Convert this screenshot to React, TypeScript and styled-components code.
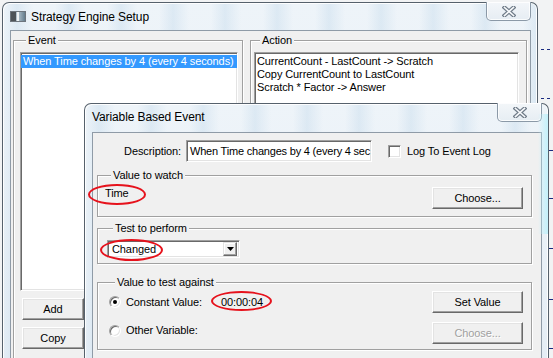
import React from "react";
import styled, { createGlobalStyle, css } from "styled-components";

const GlobalStyle = createGlobalStyle`
  html, body {
    margin: 0;
    padding: 0;
  }
  body {
    width: 553px;
    height: 358px;
    overflow: hidden;
    font-family: "Liberation Sans", Arial, sans-serif;
    font-size: 11px;
    letter-spacing: -0.1px;
    color: #000;
  }
`;

const Desktop = styled.div`
  position: relative;
  width: 553px;
  height: 358px;
  overflow: hidden;
  background: #f2f3f4;
`;

/* tree dashes peeking out on the right of the desktop */
const TreeLines = styled.svg`
  position: absolute;
  top: 0;
  right: 0;
`;

const glass = css`
  background:
    repeating-linear-gradient(
      90deg,
      rgba(180, 208, 230, 0) 0px,
      rgba(180, 208, 230, 0.3) 14px,
      rgba(180, 208, 230, 0) 30px,
      rgba(180, 208, 230, 0) 52px
    ),
    linear-gradient(180deg, #eef4f9 0%, #e3ecf4 100%);
`;

const Window = styled.div<{
  $left: number;
  $top: number;
  $width: number;
  $height: number;
  $glow?: boolean;
}>`
  position: absolute;
  left: ${(p) => p.$left}px;
  top: ${(p) => p.$top}px;
  width: ${(p) => p.$width}px;
  height: ${(p) => p.$height}px;
  box-sizing: border-box;
  display: flex;
  flex-direction: column;
  padding: 0 6px 0 7px;
  border: 1px solid #56616c;
  border-bottom: none;
  border-radius: 7px 7px 0 0;
  ${glass};
  box-shadow: inset 1px 1px 0 rgba(255, 255, 255, 0.9),
    inset -1px 0 0 rgba(255, 255, 255, 0.9);

  ${(p) =>
    p.$glow &&
    css`
      &::after {
        content: "";
        position: absolute;
        right: 0;
        top: 10px;
        width: 10px;
        height: 120px;
        background: linear-gradient(90deg, rgba(190, 240, 250, 0), rgba(190, 240, 250, 0.9));
        pointer-events: none;
      }
    `}
`;

const TitleBar = styled.div<{ $height: number }>`
  flex: none;
  height: ${(p) => p.$height}px;
  display: flex;
  align-items: center;
  gap: 5px;
  padding-bottom: ${(p) => (p.$height > 27 ? 2 : 0)}px;
  box-sizing: border-box;
`;

const TitleText = styled.span`
  font-family: "Liberation Sans", Arial, sans-serif;
  font-size: 12px;
  color: #000;
`;

const CloseButton = styled.div`
  align-self: flex-start;
  margin: -1px 0 0 auto;
  width: 45px;
  height: 19px;
  box-sizing: border-box;
  display: flex;
  align-items: center;
  justify-content: center;
  border: 1px solid #8b99a7;
  border-top: none;
  border-radius: 0 0 5px 5px;
  background: linear-gradient(180deg, #f3f6f9 0%, #e6edf3 100%);
  box-shadow: inset 0 0 0 1px rgba(255, 255, 255, 0.8);
`;

const Client = styled.div`
  flex: 1;
  box-sizing: border-box;
  background: #f0f0f0;
  border: 1px solid #8f9ba7;
  border-bottom: none;
`;

const SetupBody = styled(Client)`
  display: grid;
  grid-template-columns: 230px 277px;
  column-gap: 7px;
  align-items: start;
  padding: 3px 2px 0 2px;
`;

const DialogBody = styled(Client)`
  display: flex;
  flex-direction: column;
  padding: 7px 9px 0 4px;
`;

const GroupBox = styled.fieldset<{ $pad: string; $gap?: number }>`
  margin: ${(p) => p.$gap ?? 0}px 0 0 0;
  padding: ${(p) => p.$pad};
  min-width: 0;
  border: 1px solid #a0a0a0;
  box-shadow: inset 1px 1px 0 #fff, 1px 1px 0 #fff;
`;

const Legend = styled.legend`
  margin-left: 6px;
  padding: 0 2px;
  line-height: 13px;
  background: #f0f0f0;
  position: relative;
`;

const sunken = css`
  box-sizing: border-box;
  background: #fff;
  border: 1px solid;
  border-color: #a0a0a0 #fff #fff #a0a0a0;
  box-shadow: inset 1px 1px 0 #696969, inset -1px -1px 0 #e3e3e3;
`;

const ListBox = styled.div<{ $height: number }>`
  ${sunken};
  height: ${(p) => p.$height}px;
  padding: 2px 0 0 0;
  overflow: hidden;
`;

const ListItem = styled.div<{ $selected?: boolean }>`
  height: 13px;
  line-height: 13px;
  padding: 0 1px 0 2px;
  white-space: nowrap;
  color: ${(p) => (p.$selected ? "#fff" : "#000")};
  background: ${(p) => (p.$selected ? "#3399ff" : "transparent")};
`;

const Button = styled.button<{ $width: number; $top?: number }>`
  width: ${(p) => p.$width}px;
  height: 22px;
  margin-top: ${(p) => p.$top ?? 0}px;
  box-sizing: border-box;
  padding: 0;
  font: inherit;
  letter-spacing: inherit;
  color: #000;
  background: #f0f0f0;
  border: 1px solid;
  border-color: #fff #696969 #696969 #fff;
  box-shadow: inset -1px -1px 0 #a0a0a0, inset 1px 1px 0 #e3e3e3;

  &:disabled {
    color: #a0a0a0;
    text-shadow: 1px 1px 0 #fff;
  }
`;

const ButtonStack = styled.div`
  display: flex;
  flex-direction: column;
  padding-left: 2px;
`;

const DescRow = styled.div`
  display: flex;
  align-items: center;
  height: 22px;
`;

const FieldLabel = styled.span`
  width: 84px;
  text-align: right;
`;

const TextField = styled.div`
  ${sunken};
  width: 186px;
  height: 22px;
  margin-left: 5px;
  padding: 0 1px 0 3px;
  line-height: 20px;
  letter-spacing: -0.2px;
  white-space: nowrap;
  overflow: hidden;
`;

const CheckBox = styled.span`
  ${sunken};
  width: 13px;
  height: 13px;
  margin-left: 16px;
`;

const CheckLabel = styled.span`
  margin-left: 6px;
`;

const WatchRow = styled.div`
  display: flex;
  align-items: flex-start;
  justify-content: space-between;
  line-height: 13px;
`;

const Combo = styled.div`
  ${sunken};
  width: 133px;
  height: 18px;
  display: flex;
  align-items: center;
  padding: 0 2px 0 4px;
  line-height: 13px;
`;

const ComboText = styled.span`
  flex: 1;
`;

const DropButton = styled.span`
  width: 14px;
  height: 14px;
  box-sizing: border-box;
  display: flex;
  align-items: center;
  justify-content: center;
  background: #f0f0f0;
  border: 1px solid;
  border-color: #e3e3e3 #696969 #696969 #e3e3e3;
  box-shadow: inset -1px -1px 0 #a0a0a0, inset 1px 1px 0 #fff;
`;

const OptionRow = styled.div<{ $top?: number }>`
  display: grid;
  grid-template-columns: 112px 1fr auto;
  align-items: center;
  margin-top: ${(p) => p.$top ?? 0}px;
  line-height: 13px;
`;

const RadioOption = styled.label<{ $shift?: number }>`
  display: flex;
  align-items: center;
  gap: 5px;
  align-self: ${(p) => (p.$shift ? "start" : "center")};
  margin-top: ${(p) => p.$shift ?? 0}px;
`;

const Radio = styled.span<{ $checked?: boolean }>`
  width: 12px;
  height: 12px;
  box-sizing: border-box;
  border-radius: 50%;
  background: #fff;
  border: 1px solid;
  border-color: #a0a0a0 #fff #fff #a0a0a0;
  box-shadow: inset 1px 1px 0 #696969, inset -1px -1px 0 #e3e3e3;
  display: flex;
  align-items: center;
  justify-content: center;

  &::after {
    content: "";
    width: 4px;
    height: 4px;
    border-radius: 50%;
    background: ${(p) => (p.$checked ? "#000" : "transparent")};
  }
`;

/* red hand-drawn annotation rings laid over the values */
const Marked = styled.span`
  position: relative;
  display: inline-block;
  line-height: 13px;
`;

const Ring = styled.span<{ $l: number; $t: number; $r: number; $b: number }>`
  position: absolute;
  left: ${(p) => p.$l}px;
  top: ${(p) => p.$t}px;
  right: ${(p) => p.$r}px;
  bottom: ${(p) => p.$b}px;
  border: 2px solid #e6121c;
  border-radius: 50%;
  pointer-events: none;
`;

function CloseGlyph() {
  return (
    <svg width="14" height="11" viewBox="0 0 14 11">
      <path d="M2.5 1.5 L11.5 9.5 M11.5 1.5 L2.5 9.5" stroke="#6f7b88" strokeWidth="4" strokeLinecap="square" />
      <path d="M2.5 1.5 L11.5 9.5 M11.5 1.5 L2.5 9.5" stroke="#f7f9fb" strokeWidth="1.6" strokeLinecap="square" />
    </svg>
  );
}

function AppIcon() {
  return (
    <svg width="16" height="11" viewBox="0 0 16 11">
      <defs>
        <linearGradient id="ic" x1="0" x2="1" y1="0" y2="0">
          <stop offset="0" stopColor="#d7dde2" />
          <stop offset="0.6" stopColor="#9fb2bf" />
          <stop offset="1" stopColor="#5f7888" />
        </linearGradient>
      </defs>
      <rect x="0.5" y="0.5" width="15" height="10" fill="url(#ic)" stroke="#6d757d" />
      <rect x="1" y="1" width="5" height="9" fill="#4d5358" />
      <rect x="7" y="1" width="2" height="9" fill="#eef2f4" />
    </svg>
  );
}

function DropArrow() {
  return (
    <svg width="7" height="4" viewBox="0 0 7 4">
      <path d="M0 0 H7 L3.5 4 Z" fill="#000" />
    </svg>
  );
}

const actions = [
  "CurrentCount - LastCount -> Scratch",
  "Copy CurrentCount to LastCount",
  "Scratch * Factor -> Answer",
];

export default function App() {
  return (
    <Desktop>
      <GlobalStyle />

      <TreeLines width="16" height="358" viewBox="0 0 16 358">
        <g stroke="#1a2a80" strokeWidth="1">
          <path d="M4 49.5 H7 M10 49.5 H13 M4 98.5 H7 M10 98.5 H13" />
          <path d="M11 150.5 H16 M11 198.5 H16 M11 248.5 H16 M11 299.5 H16 M11 348.5 H16" />
        </g>
      </TreeLines>

      <Window $left={2} $top={2} $width={536} $height={400}>
        <TitleBar $height={27}>
          <AppIcon />
          <TitleText>Strategy Engine Setup</TitleText>
          <CloseButton>
            <CloseGlyph />
          </CloseButton>
        </TitleBar>

        <SetupBody>
          <GroupBox $pad="5px 4px 20px 6px">
            <Legend>Event</Legend>
            <ListBox $height={239}>
              <ListItem $selected>When Time changes by 4 (every 4 seconds)</ListItem>
            </ListBox>
            <ButtonStack>
              <Button $width={62} $top={7}>Add</Button>
              <Button $width={62} $top={7}>Copy</Button>
            </ButtonStack>
          </GroupBox>

          <GroupBox $pad="5px 7px 20px 3px">
            <Legend>Action</Legend>
            <ListBox $height={150}>
              {actions.map((a) => (
                <ListItem key={a}>{a}</ListItem>
              ))}
            </ListBox>
          </GroupBox>
        </SetupBody>
      </Window>

      <Window $left={84} $top={103} $width={465} $height={300} $glow>
        <TitleBar $height={28}>
          <TitleText>Variable Based Event</TitleText>
          <CloseButton>
            <CloseGlyph />
          </CloseButton>
        </TitleBar>

        <DialogBody>
          <DescRow>
            <FieldLabel>Description:</FieldLabel>
            <TextField>When Time changes by 4 (every 4 sec</TextField>
            <CheckBox />
            <CheckLabel>Log To Event Log</CheckLabel>
          </DescRow>

          <GroupBox $gap={7} $pad="5px 8px 7px 7px">
            <Legend>Value to watch</Legend>
            <WatchRow>
              <Marked>
                Time
                <Ring $l={-17} $t={-3} $r={-17} $b={-5} />
              </Marked>
              <Button $width={91}>Choose...</Button>
            </WatchRow>
          </GroupBox>

          <GroupBox $gap={5} $pad="5px 8px 5px 9px">
            <Legend>Test to perform</Legend>
            <Combo>
              <ComboText>
                <Marked>
                  Changed
                  <Ring $l={-12} $t={-4} $r={-7} $b={-5} />
                </Marked>
              </ComboText>
              <DropButton>
                <DropArrow />
              </DropButton>
            </Combo>
          </GroupBox>

          <GroupBox $gap={12} $pad="2px 8px 5px 11px">
            <Legend>Value to test against</Legend>
            <OptionRow>
              <RadioOption>
                <Radio $checked />
                Constant Value:
              </RadioOption>
              <span>
                <Marked>
                  00:00:04
                  <Ring $l={-10} $t={-5} $r={-9} $b={-2} />
                </Marked>
              </span>
              <Button $width={91}>Set Value</Button>
            </OptionRow>
            <OptionRow $top={9}>
              <RadioOption $shift={2}>
                <Radio />
                Other Variable:
              </RadioOption>
              <span />
              <Button $width={91} disabled>
                Choose...
              </Button>
            </OptionRow>
          </GroupBox>
        </DialogBody>
      </Window>
    </Desktop>
  );
}
